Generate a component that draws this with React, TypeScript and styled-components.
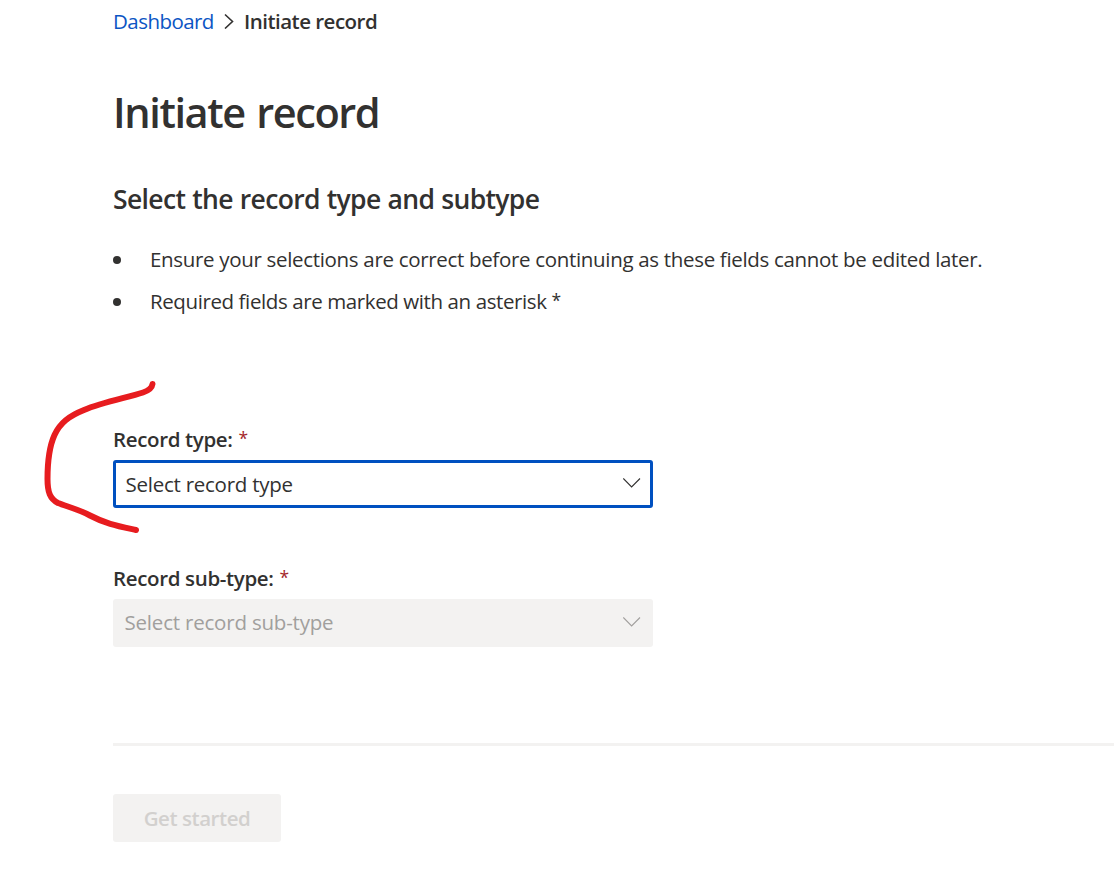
import React from "react";
import styled, { createGlobalStyle } from "styled-components";

const GlobalStyle = createGlobalStyle`
  * { box-sizing: border-box; }
  body {
    margin: 0;
    background: #ffffff;
    color: #323130;
    font-family: "Segoe UI", "Open Sans", "Noto Sans", sans-serif;
    font-size: 20.5px;
    overflow: hidden;
  }
`;

const Page = styled.main`
  position: relative;
  height: 871px;
  padding-left: 113px;
  overflow: hidden;
`;

const Breadcrumb = styled.nav`
  display: flex;
  align-items: center;
  height: 42px;
  line-height: 42px;
  white-space: nowrap;
`;

const CrumbLink = styled.a`
  width: 101px;
  color: #0b55c4;
  text-decoration: none;
  letter-spacing: -0.55px;
`;

const CrumbArrow = styled.svg`
  width: 10px;
  height: 16px;
  margin: 0 10px;
`;

const CrumbCurrent = styled.span`
  font-weight: 600;
  letter-spacing: -0.52px;
`;

const Title = styled.h1`
  margin: 42px 0 0;
  font-size: 41.5px;
  line-height: 56px;
  font-weight: 600;
  letter-spacing: -1.4px;
  word-spacing: 2px;
`;

const Subtitle = styled.h2`
  margin: 41px 0 0;
  font-size: 26.5px;
  line-height: 36px;
  font-weight: 600;
  letter-spacing: -0.65px;
  word-spacing: 0.7px;
`;

const Notes = styled.ul`
  margin: 21px 0 102px;
  padding: 0;
  list-style: none;
`;

const Note = styled.li<{ $spacing: number }>`
  display: flex;
  align-items: center;
  height: 42px;
  white-space: pre;
  letter-spacing: ${(p) => p.$spacing}px;

  &::before {
    content: "";
    width: 8px;
    height: 8px;
    margin-top: 1px;
    margin-right: 29px;
    border-radius: 50%;
    background: #323130;
  }
`;

const Field = styled.div`
  width: 540px;
  & + & { margin-top: 55px; }
`;

const Label = styled.label`
  display: block;
  height: 30px;
  margin-bottom: 6px;
  line-height: 30px;
  font-weight: 600;
  letter-spacing: -0.35px;
`;

const Asterisk = styled.span`
  font-size: 17.5px;
  font-weight: 400;
  line-height: 1;
  vertical-align: 2px;
`;

const Required = styled(Asterisk)`
  margin-left: 1px;
  color: #a4262c;
`;

const Select = styled.div<{ $disabled?: boolean }>`
  display: flex;
  align-items: center;
  justify-content: space-between;
  height: 48px;
  padding: ${(p) => (p.$disabled ? "0 12px 2px 11.5px" : "0 9px 0 9.5px")};
  border: ${(p) => (p.$disabled ? "0" : "3px solid #0050c0")};
  border-radius: 3px;
  background: ${(p) => (p.$disabled ? "#f3f2f1" : "#ffffff")};
  color: ${(p) => (p.$disabled ? "#a19f9d" : "#323130")};
  letter-spacing: ${(p) => (p.$disabled ? "-0.2px" : "-0.25px")};
  white-space: nowrap;
`;

const Chevron = styled.svg<{ $drop: number }>`
  width: 18px;
  height: 10px;
  margin-bottom: ${(p) => 2 - p.$drop * 2}px;
`;

const Divider = styled.hr`
  height: 3px;
  margin: 96px 0 48px;
  border: 0;
  background: #f3f2f1;
`;

const StartButton = styled.button`
  display: block;
  width: 168px;
  height: 48px;
  padding: 0;
  border: 0;
  border-radius: 3px;
  background: #f3f2f1;
  color: #d2d0ce;
  font: inherit;
  font-weight: 600;
  letter-spacing: -0.45px;
`;

const Annotation = styled.svg`
  position: absolute;
  left: 0;
  top: 360px;
  width: 180px;
  height: 190px;
  pointer-events: none;
`;

function DropdownIcon({ drop = 0 }: { drop?: number }) {
  return (
    <Chevron $drop={drop} viewBox="0 0 18 10" fill="none" stroke="currentColor" strokeWidth="1.1">
      <path d="M0.3 0.5L8.600 9L17 0.5" />
    </Chevron>
  );
}

export default function App() {
  return (
    <>
      <GlobalStyle />
      <Page>
        <Breadcrumb>
          <CrumbLink>Dashboard</CrumbLink>
          <CrumbArrow viewBox="0 0 10 16" fill="none" stroke="#323130" strokeWidth="1.6">
            <path d="M1 1.500L8.500 8.500L1 15.500" />
          </CrumbArrow>
          <CrumbCurrent>Initiate record</CrumbCurrent>
        </Breadcrumb>
        <Title>Initiate record</Title>
        <Subtitle>Select the record type and subtype</Subtitle>
        <Notes>
          <Note $spacing={-0.32}>
            Ensure your selections are correct before continuing as these fields cannot be edited later.
          </Note>
          <Note $spacing={-0.4}>
            <span>
              Required fields are marked with an asterisk <Asterisk>*</Asterisk>
            </span>
          </Note>
        </Notes>
        <Field>
          <Label>
            Record type: <Required>*</Required>
          </Label>
          <Select>
            Select record type
            <DropdownIcon />
          </Select>
        </Field>
        <Field>
          <Label>
            Record sub-type: <Required>*</Required>
          </Label>
          <Select $disabled>
            Select record sub-type
            <DropdownIcon drop={1} />
          </Select>
        </Field>
        <Divider />
        <StartButton disabled>Get started</StartButton>
        <Annotation viewBox="0 360 180 190" fill="none" stroke="#e71c1f" strokeWidth="6" strokeLinecap="round" strokeLinejoin="round">
          <path d="M152.5 384C152 388 149 390.5 143 392.500C128 397.500 103 402 84 410C69 416 60 423 54.500 435C50 445 47.500 460 47.500 479C47.500 492 50 499 58 503C67 506.500 79 509.500 90 515.500C105 523.500 118 526 136 530" />
        </Annotation>
      </Page>
    </>
  );
}
